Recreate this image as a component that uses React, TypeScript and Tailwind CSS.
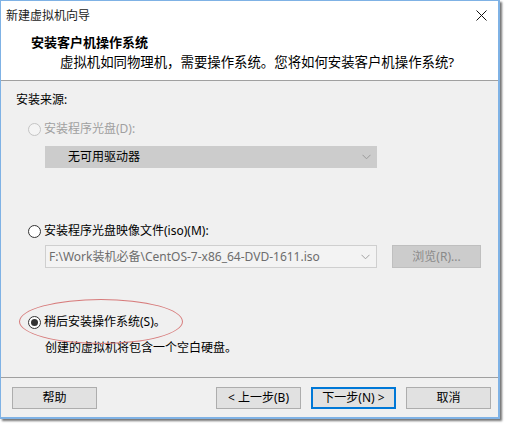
import React from "react";

function Radio({ checked = false, disabled = false }: { checked?: boolean; disabled?: boolean }) {
  return (
    <span
      className={`flex h-[13px] w-[13px] shrink-0 items-center justify-center rounded-full border ${
        disabled ? "border-[#c4c4c4] bg-[#f4f4f4]" : "border-[#333333] bg-white"
      }`}
    >
      {checked && <span className="h-[7px] w-[7px] rounded-full bg-[#333333]" />}
    </span>
  );
}

function Chevron({ color }: { color: string }) {
  return (
    <svg width="9" height="6" viewBox="0 0 9 6" fill="none">
      <path d="M0.5 0.8 L4.5 4.8 L8.5 0.8" stroke={color} strokeWidth="1" />
    </svg>
  );
}

function Btn({ label, primary = false }: { label: string; primary?: boolean }) {
  return (
    <div
      className={`flex h-[22px] w-[85px] items-center justify-center bg-[#e1e1e1] text-[12px] leading-[18px] text-black ${
        primary ? "border-2 border-[#0078d7]" : "border border-[#adadad]"
      }`}
    >
      {label}
    </div>
  );
}

export default function App() {
  return (
    <div className="h-[424px] w-[506px] bg-white font-['Noto_Sans','Noto_Sans_CJK_SC',sans-serif] text-black">
      <div className="relative flex h-[419px] w-[500px] flex-col border border-[#7fb2e5] border-r-2 border-b-2 shadow-[2px_2px_2px_rgba(0,0,0,0.55)]">
        {/* title bar */}
        <div className="flex h-[29px] items-center justify-between bg-white pl-[5px] pr-[11px]">
          <span className="text-[12px] leading-[18px] text-[#222]">新建虚拟机向导</span>
          <svg width="11" height="11" viewBox="0 0 11 11">
            <path d="M0.5 0.5 L10.5 10.5 M10.5 0.5 L0.5 10.5" stroke="#111" strokeWidth="1" />
          </svg>
        </div>
        {/* header */}
        <div className="flex h-[50px] flex-col bg-white pt-[3px]">
          <div className="h-[18px] pl-[30px] text-[13px] font-bold leading-[18px]">安装客户机操作系统</div>
          <div className="mt-[2px] h-[18px] pl-[59px] text-[13.4px] leading-[18px]">
            虚拟机如同物理机，需要操作系统。您将如何安装客户机操作系统?
          </div>
        </div>
        <div className="h-px bg-[#a0a0a0]" />
        {/* body */}
        <div className="flex h-[296px] flex-col bg-[#f0f0f0] pl-[15px]">
          <div className="mt-[10px] h-[18px] text-[12px] leading-[18px]">安装来源:</div>

          <div className="ml-[12px] mt-[11px] flex h-[18px] items-center gap-[3px]">
            <Radio disabled />
            <span className="text-[12px] leading-[18px] text-[#a0a0a0]">安装程序光盘(D):</span>
          </div>
          <div className="ml-[29px] mt-[8px] flex h-[22px] w-[332px] items-center justify-between bg-[#cccccc] pl-[23px] pr-[6px]">
            <span className="text-[12px] leading-[18px]">无可用驱动器</span>
            <Chevron color="#9a9a9a" />
          </div>

          <div className="ml-[12px] mt-[54px] flex h-[18px] items-center gap-[3px]">
            <Radio />
            <span className="text-[12px] leading-[18px]">安装程序光盘映像文件(iso)(M):</span>
          </div>
          <div className="ml-[29px] mt-[5px] flex h-[23px] items-center gap-[15px]">
            <div className="flex h-[23px] w-[332px] items-center justify-between border border-[#cfcfcf] bg-[#f3f3f3] pl-[3px] pr-[6px]">
              <span className="text-[12px] leading-[18px] text-[#6d6d6d]">F:\Work装机必备\CentOS-7-x86_64-DVD-1611.iso</span>
              <Chevron color="#a0a0a0" />
            </div>
            <div className="flex h-[23px] w-[89px] items-center justify-center border border-[#bfbfbf] bg-[#cccccc] text-[12px] leading-[18px] text-[#8a8a8a]">
              浏览(R)...
            </div>
          </div>

          <div className="ml-[12px] mt-[45px] flex h-[18px] items-center gap-[3px]">
            <Radio checked />
            <span className="text-[12px] leading-[18px]">稍后安装操作系统(S)。</span>
          </div>
          <div className="ml-[29px] mt-[8px] h-[18px] text-[12px] leading-[18px]">创建的虚拟机将包含一个空白硬盘。</div>
        </div>
        <div className="h-px bg-[#a0a0a0]" />
        {/* footer */}
        <div className="flex flex-1 items-start bg-[#f0f0f0] pl-[11px] pt-[9px]">
          <Btn label="帮助" />
          <div className="ml-[119px] flex gap-[10px]">
            <Btn label="< 上一步(B)" />
            <Btn label="下一步(N) >" primary />
            <Btn label="取消" />
          </div>
        </div>

        {/* red annotation ellipse */}
        <div className="pointer-events-none absolute left-[18px] top-[298px] h-[45px] w-[164px] rounded-[50%] border border-[#d77b7b]" />
      </div>
    </div>
  );
}
